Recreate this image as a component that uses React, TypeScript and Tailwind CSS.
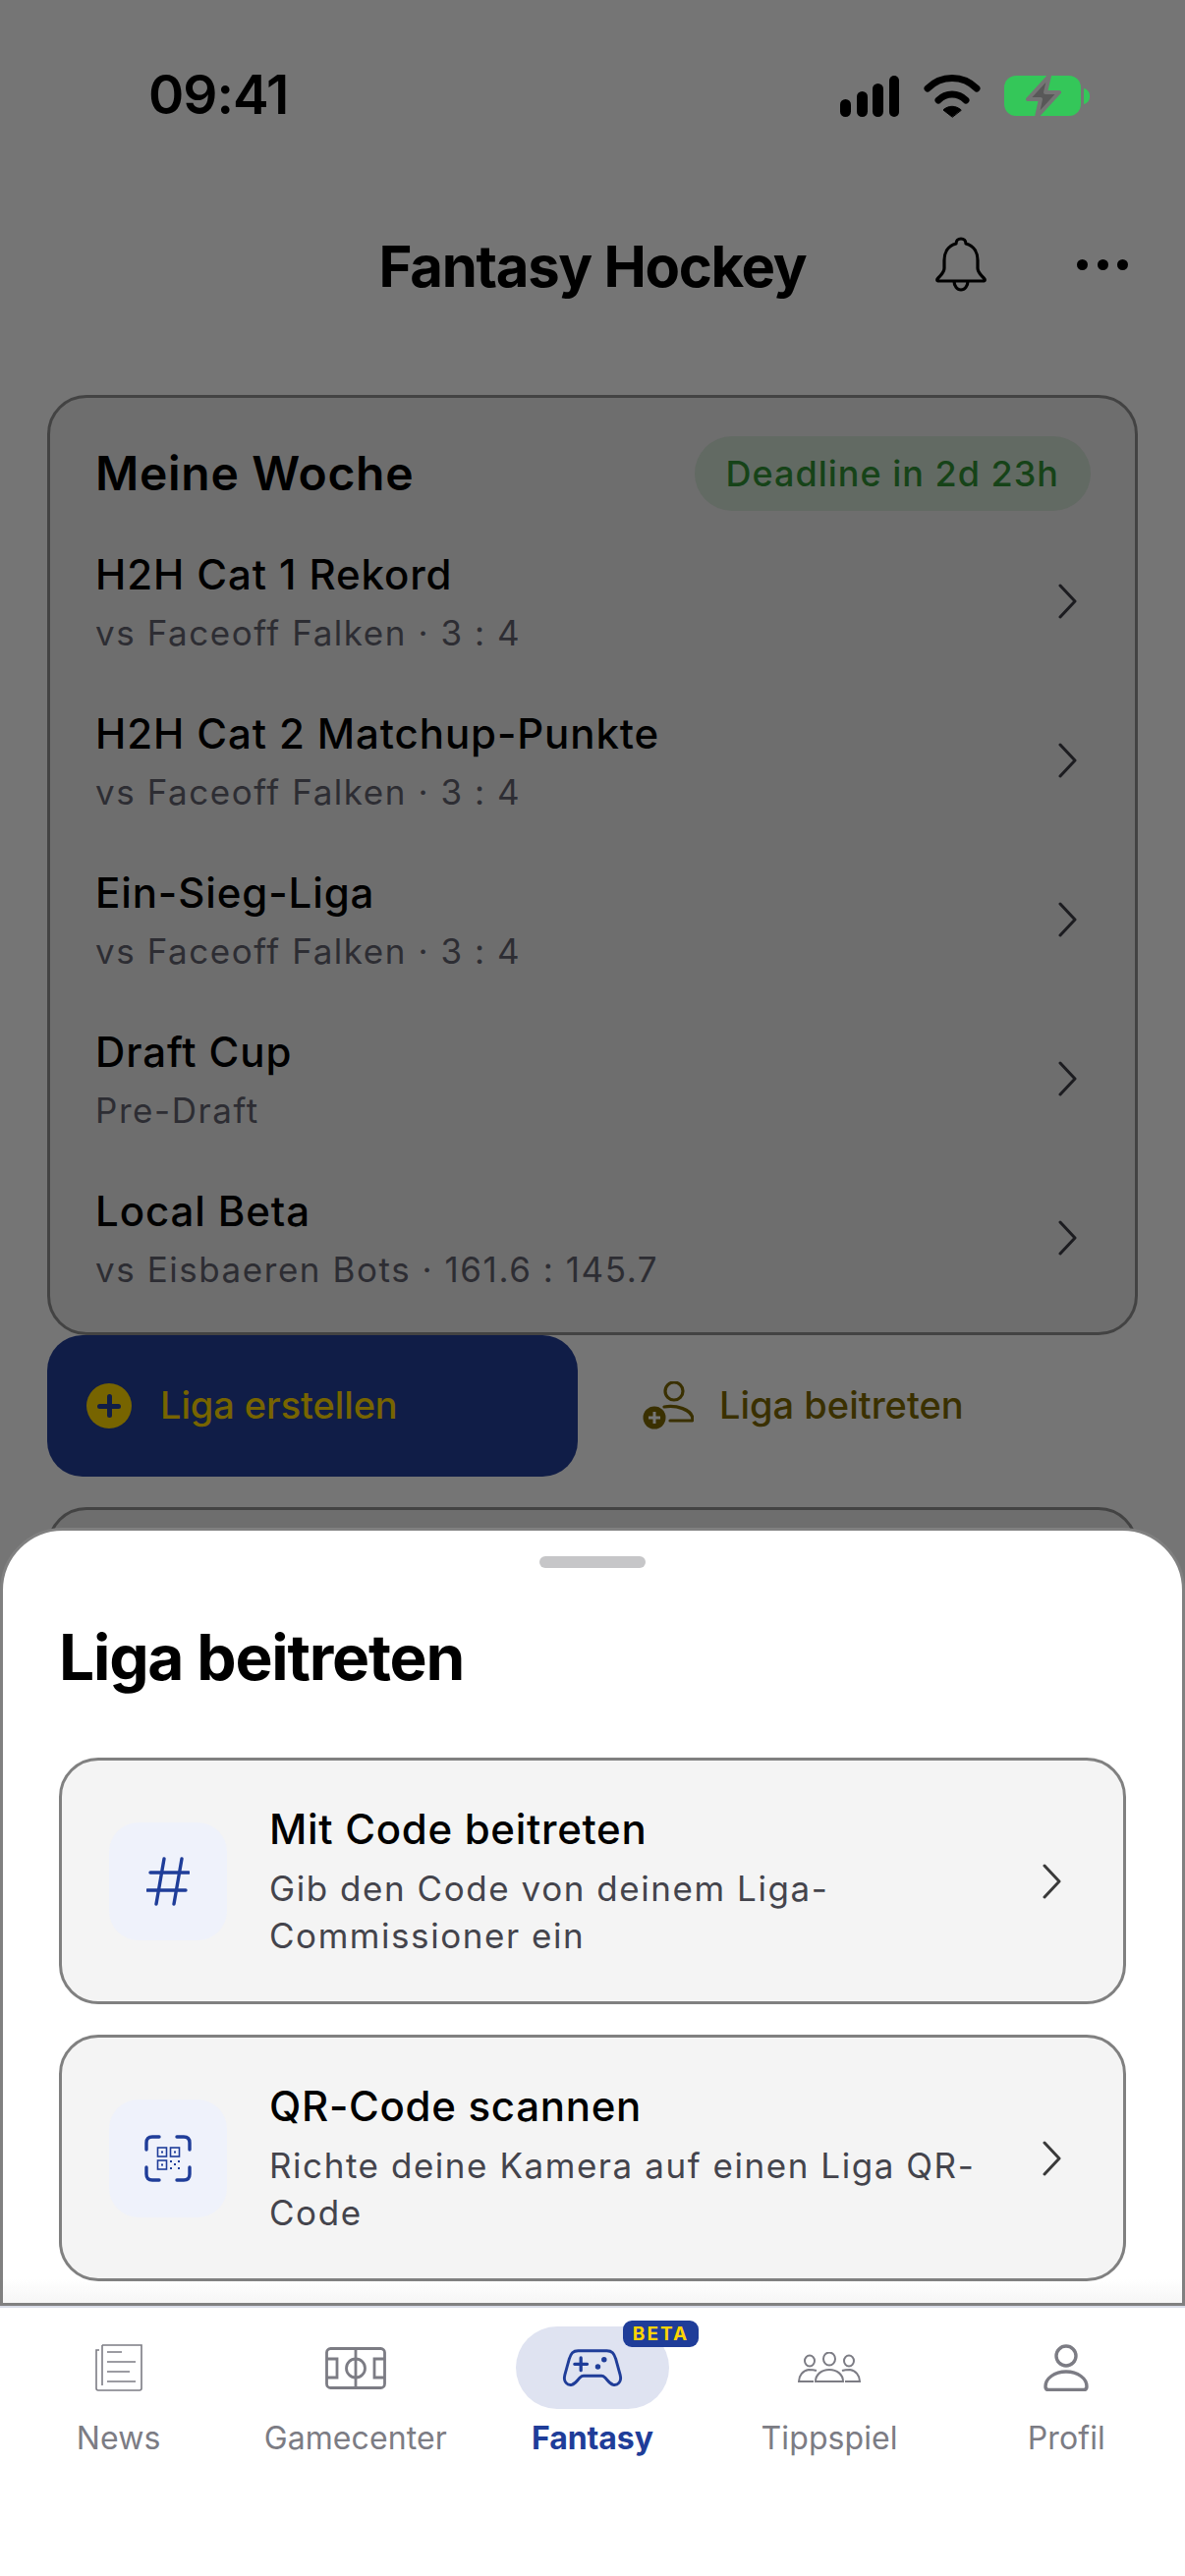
import React from 'react';

const rows = [
  { title: 'H2H Cat 1 Rekord', sub: 'vs Faceoff Falken · 3 : 4' },
  { title: 'H2H Cat 2 Matchup-Punkte', sub: 'vs Faceoff Falken · 3 : 4' },
  { title: 'Ein-Sieg-Liga', sub: 'vs Faceoff Falken · 3 : 4' },
  { title: 'Draft Cup', sub: 'Pre-Draft' },
  { title: 'Local Beta', sub: 'vs Eisbaeren Bots · 161.6 : 145.7' },
];

const Chevron = ({ color }: { color: string }) => (
  <svg width="19" height="36" viewBox="0 0 19 36" fill="none" stroke={color} strokeWidth="3" strokeLinecap="round" strokeLinejoin="round" className="shrink-0">
    <path d="M2 2 L17 18 L2 34" />
  </svg>
);

const StatusIcons = () => (
  <div className="flex items-center gap-[24px]">
    <svg width="62" height="42" viewBox="0 0 62 42" fill="#000">
      <rect x="1" y="24" width="11" height="18" rx="5.5" />
      <rect x="18" y="16" width="11" height="26" rx="5.5" />
      <rect x="34" y="8" width="11" height="34" rx="5.5" />
      <rect x="51" y="0" width="10" height="42" rx="5" />
    </svg>
    <svg width="58" height="44" viewBox="0 0 58 44" fill="none" stroke="#000" strokeLinecap="round" strokeWidth="7">
      <path d="M4 14 C18 0 40 0 54 14" />
      <path d="M15 26 C23 18 35 18 43 26" />
      <path d="M29 43 L20 36 C25 31 33 31 38 36 Z" fill="#000" strokeWidth="1" strokeLinejoin="round" />
    </svg>
    <svg width="87" height="44" viewBox="0 0 87 44">
      <rect x="0" y="1" width="78" height="41" rx="12" fill="#34c759" />
      <path d="M81 14 C85 15 87 18 87 22 C87 26 85 29 81 30 Z" fill="#34c759" />
      <path d="M46 1 L24 25 H37 L33 43 L56 18 H42 Z" fill="#585858" stroke="#757575" strokeWidth="4" strokeLinejoin="round" />
    </svg>
  </div>
);

const BellIcon = () => (
  <svg width="52" height="56" viewBox="0 0 52 56" fill="none" stroke="#000" strokeWidth="3.2" strokeLinejoin="round">
    <path d="M26 2 C23 2 21 4 21 7 C13 9 9 16 9 24 V32 C9 37 5 39 2 43 Q1 45 4 45 H48 Q51 45 50 43 C47 39 43 37 43 32 V24 C43 16 39 9 31 7 C31 4 29 2 26 2 Z" />
    <path d="M19 45 C19 50 22 54 26 54 C30 54 33 50 33 45" />
  </svg>
);

const PersonPlus = () => (
  <svg width="52" height="50" viewBox="0 0 52 50" fill="none" stroke="#3a3000" strokeWidth="3.2" strokeLinecap="round">
    <circle cx="32" cy="10" r="9" />
    <path d="M22 26 C33 24 51 28 51 39 Q51 40 49 40 H28" />
    <circle cx="12" cy="37" r="11.5" fill="#3a3000" stroke="none" />
    <path d="M12 31 V43 M6 37 H18" stroke="#757575" strokeWidth="3" strokeLinecap="butt" />
  </svg>
);

const QrIcon = () => (
  <svg width="48" height="48" viewBox="0 0 48 48" fill="none" stroke="#1f3d99">
    <path d="M15 2 H8 Q2 2 2 8 V15 M33 2 H40 Q46 2 46 8 V15 M15 46 H8 Q2 46 2 40 V33 M33 46 H40 Q46 46 46 40 V33" strokeWidth="3.4" strokeLinecap="round" />
    <rect x="13.5" y="13" width="9" height="9" strokeWidth="1.6" />
    <rect x="26.5" y="13" width="9" height="9" strokeWidth="1.6" />
    <rect x="13.5" y="26" width="9" height="9" strokeWidth="1.6" />
    <rect x="17" y="16.5" width="2" height="2" fill="#1f3d99" stroke="none" />
    <rect x="30" y="16.5" width="2" height="2" fill="#1f3d99" stroke="none" />
    <rect x="17" y="29.5" width="2" height="2" fill="#1f3d99" stroke="none" />
    <g fill="#1f3d99" stroke="none">
      <rect x="26" y="26" width="2" height="2" />
      <rect x="30" y="29" width="2" height="2" />
      <rect x="34" y="26" width="2" height="2" />
      <rect x="26" y="33" width="2" height="2" />
      <rect x="34" y="33" width="2" height="2" />
    </g>
  </svg>
);

const HashIcon = () => (
  <svg width="44" height="50" viewBox="0 0 44 50" fill="none" stroke="#1f3d99" strokeWidth="3.4" strokeLinecap="round">
    <path d="M18 2 L10 48 M36 2 L28 48 M4 16 H43 M1 34 H40" />
  </svg>
);

const NewsIcon = () => (
  <svg width="48" height="48" viewBox="0 0 48 48" fill="none" stroke="#7c7c84" strokeWidth="1.6">
    <path d="M7 1 H47 V45 Q47 47 45 47 H3 Q1 47 1 45 V6 H4" />
    <path d="M7 1 V42" />
    <path d="M12 8 H27 M12 18 H41 M12 28 H35 M12 38 H41" />
  </svg>
);

const PitchIcon = () => (
  <svg width="62" height="43" viewBox="0 0 62 43" fill="none" stroke="#7c7c84" strokeWidth="2.8">
    <rect x="1.500" y="1.500" width="59" height="40" rx="4" />
    <path d="M31 1.500 V41.500" />
    <circle cx="31" cy="21.500" r="9.500" />
    <path d="M1.500 12 H12 V31 H1.500 M60.500 12 H50 V31 H60.500" />
  </svg>
);

const PadIcon = () => (
  <svg width="64" height="40" viewBox="0 0 66 44" fill="none" stroke="#1f3d99" strokeWidth="3.2" strokeLinecap="round" strokeLinejoin="round">
    <path d="M17 3 H49 C55 3 57 6 59 12 L64 30 C66 38 61 42 56 41 C52 40 50 36 47 33 C46 32 45 31 43 31 H23 C21 31 20 32 19 33 C16 36 14 40 10 41 C5 42 0 38 2 30 L7 12 C9 6 11 3 17 3 Z" />
    <path d="M20 11 V25 M13 18 H27" strokeWidth="3.600" />
    <circle cx="46" cy="13" r="3" fill="#1f3d99" stroke="none" />
    <circle cx="39" cy="21" r="3" fill="#1f3d99" stroke="none" />
  </svg>
);

const GroupIcon = () => (
  <svg width="64" height="32" viewBox="0 0 64 32" fill="none" stroke="#7c7c84" strokeWidth="2">
    <ellipse cx="12" cy="9" rx="5" ry="5.500" />
    <ellipse cx="32" cy="7" rx="6" ry="6.500" />
    <ellipse cx="52" cy="9" rx="5" ry="5.500" />
    <path d="M19 19 C16 18 13 18 11 18 C5 19 1 24 1 30 H16" />
    <path d="M45 19 C48 18 51 18 53 18 C59 19 63 24 63 30 H48" />
    <path d="M32 18 C24 18 18 23 18 30 H46 C46 23 40 18 32 18 Z" />
  </svg>
);

const ProfileIcon = () => (
  <svg width="46" height="48" viewBox="0 0 46 48" fill="none" stroke="#7c7c84" strokeWidth="3.400">
    <circle cx="23" cy="12" r="10" />
    <path d="M23 28 C11 28 2 35 2 43 C2 45 3 46.500 5 46.500 H41 C43 46.500 44 45 44 43 C44 35 35 28 23 28 Z" />
  </svg>
);

const tabs = [
  { label: 'News', icon: <NewsIcon /> },
  { label: 'Gamecenter', icon: <PitchIcon /> },
  { label: 'Fantasy', icon: <PadIcon />, active: true },
  { label: 'Tippspiel', icon: <GroupIcon /> },
  { label: 'Profil', icon: <ProfileIcon /> },
];

const actions = [
  { title: 'Mit Code beitreten', sub: ['Gib den Code von deinem Liga-', 'Commissioner ein'], icon: <HashIcon /> },
  { title: 'QR-Code scannen', sub: ['Richte deine Kamera auf einen Liga QR-', 'Code'], icon: <QrIcon /> },
];

export default function App() {
  return (
    <div className="relative flex h-[2622px] w-[1206px] flex-col overflow-hidden bg-[#757575] font-['Inter',sans-serif]">
      {/* status bar */}
      <div className="flex h-[194px] shrink-0 items-start justify-between pl-[151px] pr-[97px] pt-[63px]">
        <span className="text-[55px] font-semibold leading-[66px] tracking-[-1px] text-black">09:41</span>
        <div className="pt-[13px]">
          <StatusIcons />
        </div>
      </div>

      {/* header */}
      <div className="relative flex h-[208px] shrink-0 items-start justify-center pt-[43px]">
        <h1 className="text-[58px] font-bold leading-[68px] tracking-[-1.300px] text-black">Fantasy Hockey</h1>
        <div className="absolute left-[952px] top-[47px]">
          <BellIcon />
        </div>
        <div className="absolute left-[1096px] top-[70px] flex gap-[9.500px]">
          <span className="h-[11px] w-[11px] rounded-full bg-black" />
          <span className="h-[11px] w-[11px] rounded-full bg-black" />
          <span className="h-[11px] w-[11px] rounded-full bg-black" />
        </div>
      </div>

      {/* Meine Woche */}
      <div className="mx-[48px] flex h-[957px] shrink-0 flex-col rounded-[40px] border-[3px] border-[#434343] bg-[#6e6e6e] pl-[46px] pr-[45px]">
        <div className="flex h-[126px] shrink-0 items-start justify-between pt-[39px]">
          <span className="flex h-[76px] items-center text-[48px] font-semibold tracking-[0.700px] text-black">Meine Woche</span>
          <span className="flex h-[76px] items-center rounded-full bg-[#626a63] px-[32px] text-[36px] font-medium tracking-[1px] text-[#164318]">Deadline in 2d 23h</span>
        </div>
        {rows.map((row) => (
          <div key={row.title} className="flex h-[162px] shrink-0 items-center justify-between pr-[14px]">
            <div className="flex flex-col gap-[12px] pt-[2px]">
              <span className="text-[42px] font-[550] leading-[50px] tracking-[0.900px] text-black">{row.title}</span>
              <span className="text-[35px] font-normal leading-[44px] tracking-[1.550px] text-[#2d2d33]">{row.sub}</span>
            </div>
            <Chevron color="#1c1c20" />
          </div>
        ))}
      </div>

      {/* Liga buttons */}
      <div className="mx-[48px] flex h-[144px] shrink-0 items-center">
        <div className="flex h-[144px] w-[540px] items-center gap-[29px] rounded-[36px] bg-[#101d47] pl-[40px]">
          <span className="relative flex h-[46px] w-[46px] items-center justify-center rounded-full bg-[#776400]">
            <span className="absolute h-[5px] w-[24px] rounded-full bg-[#101d47]" />
            <span className="absolute h-[24px] w-[5px] rounded-full bg-[#101d47]" />
          </span>
          <span className="-mt-[2px] text-[38px] font-medium leading-[48px] tracking-[-0.100px] text-[#776400]">Liga erstellen</span>
        </div>
        <div className="ml-[66px] flex items-center gap-[26px]">
          <PersonPlus />
          <span className="-mt-[2px] text-[38px] font-medium leading-[48px] text-[#3a3000]">Liga beitreten</span>
        </div>
      </div>

      {/* next card, cut off by the sheet */}
      <div className="mx-[48px] mt-[31px] h-[200px] shrink-0 rounded-[40px] border-[3px] border-[#434343] bg-[#6e6e6e]" />

      {/* bottom nav */}
      <div className="absolute bottom-0 left-0 right-0 z-20 flex h-[275px] border-t-[2px] border-[#d9dce8] bg-white pt-[19px]">
        {tabs.map((tab) => (
          <div key={tab.label} className="flex w-[241.200px] flex-col items-center">
            <div className="relative flex h-[84px] w-[156px] items-center justify-center">
              {tab.active && <div className="absolute inset-0 rounded-full bg-[#dfe3f1]" />}
              {tab.active && (
                <div className="absolute left-[109px] top-[-6px] flex h-[27px] w-[77px] items-center justify-center rounded-[9px] bg-[#1f3d99] text-[19px] font-bold leading-none tracking-[2px] text-[#ffd400]">BETA</div>
              )}
              <div className="relative flex h-[52px] items-center">{tab.icon}</div>
            </div>
            <span className={`mt-[10px] text-[32px] leading-[40px] ${tab.active ? 'font-bold tracking-[-0.100px] text-[#1f3d99]' : 'font-normal tracking-[0.100px] text-[#7c7c84]'}`}>{tab.label}</span>
          </div>
        ))}
      </div>

      {/* sheet */}
      <div className="absolute left-[0px] right-[0px] top-[1555px] z-10 flex h-[792px] flex-col rounded-t-[64px] border-[3px] border-[#808080] bg-white px-[57px]">
        <div className="absolute bottom-0 left-0 right-0 h-[24px] bg-gradient-to-b from-white to-[#f6f6f6]" />
        <div className="mt-[26px] h-[12px] w-[108px] self-center rounded-full bg-[#c6c6c8]" />
        <h2 className="mt-[55px] text-[64px] font-bold leading-[72px] tracking-[-1.200px] text-black">Liga beitreten</h2>
        <div className="relative mt-[66px] flex flex-col gap-[31px]">
          {actions.map((a) => (
            <div key={a.title} className="flex h-[251px] items-center rounded-[40px] border-[3px] border-[#808080] bg-[#f4f4f4] pl-[48px] pr-[63px]">
              <div className="flex h-[120px] w-[120px] shrink-0 items-center justify-center rounded-[30px] bg-[#eff2fb]">{a.icon}</div>
              <div className="ml-[43px] flex-1 pt-[2px]">
                <div className="text-[42px] font-[550] leading-[50px] tracking-[0.700px] text-black">{a.title}</div>
                <div className="mt-[11px] text-[35px] leading-[48px] tracking-[1.550px] text-[#44444c]">
                  {a.sub.map((s) => (
                    <div key={s}>{s}</div>
                  ))}
                </div>
              </div>
              <Chevron color="#3a3a3a" />
            </div>
          ))}
        </div>
      </div>
    </div>
  );
}
